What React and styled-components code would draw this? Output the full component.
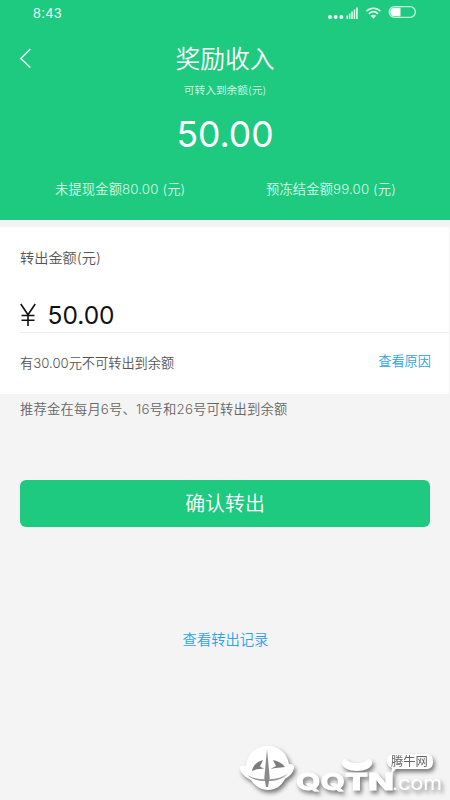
import React from "react";
import styled, { createGlobalStyle } from "styled-components";

const GlobalStyle = createGlobalStyle`
  * { box-sizing: border-box; }
  body { margin: 0; background: #f4f4f4; }
`;

const Screen = styled.div`
  position: relative;
  display: flex;
  flex-direction: column;
  width: 450px;
  height: 800px;
  overflow: hidden;
  background: #f4f4f4;
  color: #555;
  font-family: Inter, "Noto Sans CJK SC", sans-serif;
  font-weight: 350;
`;

const Header = styled.header`
  display: flex;
  flex-direction: column;
  height: 220px;
  background: #1ec980;
  color: #fff;
`;

const StatusBar = styled.div`
  display: flex;
  justify-content: space-between;
  align-items: center;
  height: 26px;
  padding: 0 32px 0 33px;
`;

const Clock = styled.span`
  font-family: "Liberation Sans", sans-serif;
  font-size: 14px;
  line-height: 26px;
  letter-spacing: 0.4px;
  color: #e4fff2;
`;

const TitleBar = styled.div`
  display: grid;
  grid-template-columns: 60px 1fr 60px;
  align-items: center;
  height: 64px;
  padding-top: 1px;
`;

const BackButton = styled.button`
  display: flex;
  margin-bottom: 2px;
  padding: 0 0 0 19px;
  border: 0;
  background: none;
`;

const Title = styled.h1`
  margin: 0;
  font-size: 24.8px;
  line-height: 36px;
  font-weight: 350;
  text-align: center;
`;

const Caption = styled.div`
  height: 16px;
  margin-top: -7px;
  font-size: 10.7px;
  line-height: 16px;
  text-align: center;
  color: #d5fae8;
`;

const Balance = styled.div`
  height: 44px;
  margin-top: 14px;
  font-size: 35.5px;
  line-height: 44px;
  font-weight: 400;
  text-align: center;
`;

const Stats = styled.div`
  display: flex;
  justify-content: space-between;
  margin-top: 22px;
  padding: 0 54px 0 55px;
`;

const Stat = styled.span`
  font-size: 13.3px;
  line-height: 20px;
  letter-spacing: 0.12px;
  color: #d5fae8;
`;

const Panel = styled.section`
  display: flex;
  flex-direction: column;
  height: 167px;
  margin: 7px 1px 0 0;
  padding-left: 20px;
  background: #fff;
`;

const FieldLabel = styled.div`
  margin-top: 21px;
  font-size: 14.2px;
  line-height: 20px;
`;

const AmountField = styled.div`
  display: flex;
  align-items: center;
  height: 65px;
  padding-top: 29px;
  border-bottom: 1px solid #ececec;
  color: #111;
`;

const AmountValue = styled.span`
  margin-left: 10.5px;
  font-size: 24.5px;
  line-height: 36px;
  font-weight: 400;
`;

const HintRow = styled.div`
  display: flex;
  justify-content: space-between;
  height: 60px;
  padding: 20px 18px 0 0;
  font-size: 13.2px;
  line-height: 20px;
`;

const HintLink = styled.a`
  margin-top: -2px;
  color: #2ba2e8;
`;

const Note = styled.p`
  margin: 5px 20px 0;
  font-size: 13.3px;
  line-height: 20px;
  letter-spacing: 0.18px;
  color: #666;
`;

const ConfirmButton = styled.button`
  height: 47px;
  margin: 61px 20px 0;
  padding: 2px 0 0;
  border: 0;
  border-radius: 6px;
  background: #1ec980;
  color: #fff;
  font: 350 19.9px/45px Inter, "Noto Sans CJK SC", sans-serif;
`;

const RecordsLink = styled.a`
  margin-top: 103px;
  padding-left: 1px;
  font-size: 14.3px;
  line-height: 20px;
  text-align: center;
  color: #2ba2e8;
`;

const Watermark = styled.svg`
  position: absolute;
  left: 235px;
  top: 740px;
  filter: drop-shadow(2px 3px 2px rgba(0, 0, 0, 0.5));
`;

const BackIcon = () => (
  <svg width="14" height="22" viewBox="0 0 14 22" fill="none" stroke="#e8fff5" strokeWidth="1.5">
    <path d="M11.3 2 1.8 11.5l9.5 9" />
  </svg>
);

const StatusIcons = () => (
  <svg width="92" height="18" viewBox="0 0 92 18" fill="#e4fff2">
    <circle cx="4" cy="13" r="2" />
    <circle cx="9.6" cy="13" r="2" />
    <circle cx="15.400" cy="13" r="2" />
    <path d="M20.5 11.5h1.5V15h-1.5zM22.9 9.5h1.5V15h-1.5zM25.3 7.5h1.5V15h-1.5zM27.7 5.5h1.5V15h-1.5zM30.1 3.5h1.6V15h-1.6z" />
    <g fill="none" stroke="#e4fff2" strokeWidth="1.6">
      <path d="M40.4 7.2c4-4 10-4 14 0M42.8 9.8c2.8-2.6 6.4-2.6 9.2 0" />
    </g>
    <path d="M44.6 11.7c1.8-1.4 3.8-1.4 5.6 0l-2.8 3z" />
    <rect x="63.2" y="2.700" width="26.2" height="10.6" rx="5.3" fill="none" stroke="#c3f7dd" strokeWidth="1.3" />
    <path d="M74.5 3.800v8.4h-6a4.2 4.2 0 0 1 0-8.4z" fill="#fff" />
  </svg>
);

const SiteMark = () => (
  <Watermark width="213" height="60" viewBox="0 0 213 60" fill="#fff">
    <path d="M11 26C12 14 21 6 33 6c11 0 19 7 21 18 3 0 5 1 5 3 0 5-4 9-9 12-4 7-9 11-17 11-7 0-13-4-17-10-6-3-11-7-11-12 0-2 2-3 6-2z" />
    <path d="m32 9 2.700 29-1.700 9h-2l-1.700-9z" fill="#8a8a8a" />
    <path d="M17 31c1-6 5-9 11-11l-3 6.500 4.500 2.500c-5-.5-9 .5-12.500 2zM50 27c-3-4-7-6-12-7l3 6-5.500 3c5-1 9-1.500 14.500-2z" fill="#7c7c7c" />
    <path d="M12 35c5 3 11 4.200 18 4.200v1.800c-7 0-13-1.500-18-6zM34 39.200c8-.2 14-2 19-6-4 5-11 7.800-19 7.800z" fill="#999" />
    <path d="M111 19c2 3 6 4 11 4s9-1 11-4c3 0 5 2 4 5-1 4-7 7-15 7s-14-3-15-7c-1-3 1-5 4-5z" />
    <g stroke="#fff" strokeWidth=".8" fontFamily="Inter, sans-serif" fontSize="23" fontWeight="800">
      <text x="61" y="50" fontWeight="700" textLength="49" lengthAdjust="spacingAndGlyphs">QQ</text>
      <text x="110" y="50" textLength="49" lengthAdjust="spacingAndGlyphs">TN</text>
    </g>
    <text x="157" y="50" fontFamily="Inter, sans-serif" fontSize="20" fontWeight="400" textLength="50" lengthAdjust="spacingAndGlyphs">.com</text>
    <path d="M158 14h34q6 0 6 7.500t-6 7.500h-31l-5 5 1-6q-5-2-5-6.500 0-7.500 6-7.500z" />
    <text x="156" y="26" fill="#666" fontFamily="'Noto Sans CJK SC', sans-serif" fontSize="12.300" fontWeight="400">腾牛网</text>
  </Watermark>
);

const YenIcon = () => (
  <svg width="17" height="24" viewBox="0 0 17 24" fill="none" stroke="#111" strokeWidth="1.6" role="img" aria-label="¥">
    <path d="M.8 1 8 11.8 15.200 1M8 11.500V23M1.500 12.500h13M1.500 17.300h13" />
  </svg>
);

export default function App() {
  return (
    <Screen>
      <GlobalStyle />
      <Header>
        <StatusBar>
          <Clock>8:43</Clock>
          <StatusIcons />
        </StatusBar>
        <TitleBar>
          <BackButton aria-label="返回">
            <BackIcon />
          </BackButton>
          <Title>奖励收入</Title>
        </TitleBar>
        <Caption>可转入到余额(元)</Caption>
        <Balance>50.00</Balance>
        <Stats>
          <Stat>未提现金额80.00 (元)</Stat>
          <Stat>预冻结金额99.00 (元)</Stat>
        </Stats>
      </Header>
      <Panel>
        <FieldLabel>转出金额(元)</FieldLabel>
        <AmountField>
          <YenIcon />
          <AmountValue>50.00</AmountValue>
        </AmountField>
        <HintRow>
          <span>有30.00元不可转出到余额</span>
          <HintLink>查看原因</HintLink>
        </HintRow>
      </Panel>
      <Note>推荐金在每月6号、16号和26号可转出到余额</Note>
      <ConfirmButton>确认转出</ConfirmButton>
      <RecordsLink>查看转出记录</RecordsLink>
      <SiteMark />
    </Screen>
  );
}
